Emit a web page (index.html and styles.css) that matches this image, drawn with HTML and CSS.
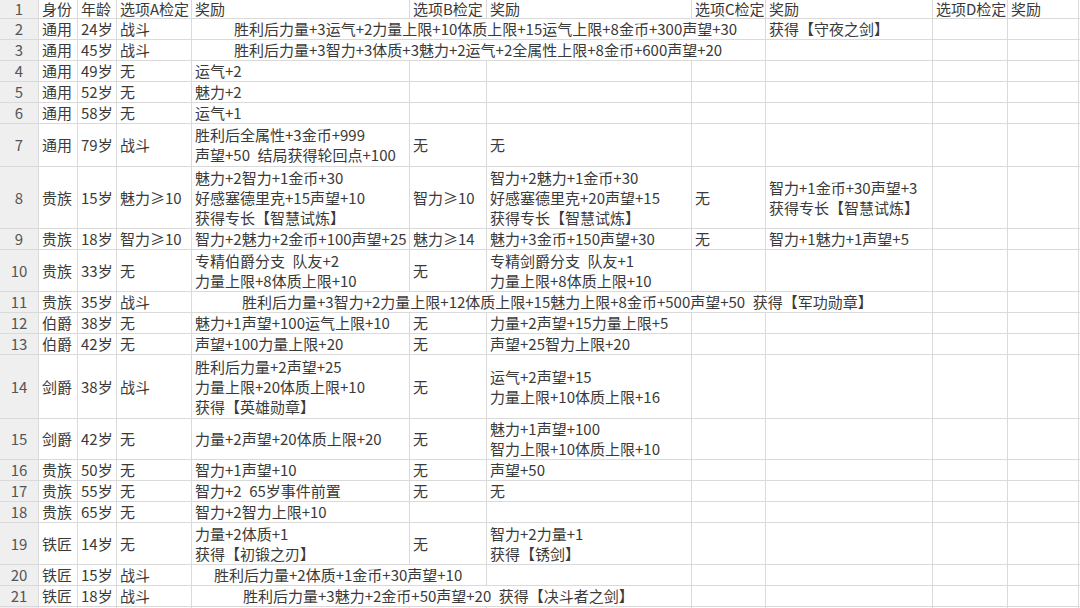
FILE: index.html
```html
<!DOCTYPE html>
<html lang="zh-CN">
<head>
<meta charset="utf-8">
<title>事件表</title>
<link rel="stylesheet" href="styles.css">
</head>
<body>
<table class="sheet">
  <colgroup>
    <col class="c-rn"><col class="c-a"><col class="c-b"><col class="c-c"><col class="c-d"><col class="c-e"><col class="c-f"><col class="c-g"><col class="c-h"><col class="c-i"><col class="c-j"><col class="c-k">
  </colgroup>
  <tbody>
    <tr class="r-hd"><th class="rn">1</th><td>身份</td><td>年龄</td><td>选项A检定</td><td>奖励</td><td>选项B检定</td><td>奖励</td><td>选项C检定</td><td>奖励</td><td>选项D检定</td><td>奖励</td><td></td></tr>
    <tr><th class="rn">2</th><td>通用</td><td>24岁</td><td>战斗</td><td colspan="4" class="spill s42">胜利后力量+3运气+2力量上限+10体质上限+15运气上限+8金币+300声望+30</td><td>获得【守夜之剑】</td><td></td><td></td><td></td></tr>
    <tr><th class="rn">3</th><td>通用</td><td>45岁</td><td>战斗</td><td colspan="4" class="spill s42">胜利后力量+3智力+3体质+3魅力+2运气+2全属性上限+8金币+600声望+20</td><td></td><td></td><td></td><td></td></tr>
    <tr><th class="rn">4</th><td>通用</td><td>49岁</td><td>无</td><td>运气+2</td><td></td><td></td><td></td><td></td><td></td><td></td><td></td></tr>
    <tr><th class="rn">5</th><td>通用</td><td>52岁</td><td>无</td><td>魅力+2</td><td></td><td></td><td></td><td></td><td></td><td></td><td></td></tr>
    <tr><th class="rn">6</th><td>通用</td><td>58岁</td><td>无</td><td>运气+1</td><td></td><td></td><td></td><td></td><td></td><td></td><td></td></tr>
    <tr class="r-43"><th class="rn">7</th><td>通用</td><td>79岁</td><td>战斗</td><td>胜利后全属性+3金币+999<br>声望+50&ensp;结局获得轮回点+100</td><td>无</td><td>无</td><td></td><td></td><td></td><td></td><td></td></tr>
    <tr class="r-62"><th class="rn">8</th><td>贵族</td><td>15岁</td><td>魅力≥10</td><td>魅力+2智力+1金币+30<br>好感塞德里克+15声望+10<br>获得专长【智慧试炼】</td><td>智力≥10</td><td>智力+2魅力+1金币+30<br>好感塞德里克+20声望+15<br>获得专长【智慧试炼】</td><td>无</td><td>智力+1金币+30声望+3<br>获得专长【智慧试炼】</td><td></td><td></td><td></td></tr>
    <tr><th class="rn">9</th><td>贵族</td><td>18岁</td><td>智力≥10</td><td>智力+2魅力+2金币+100声望+25</td><td>魅力≥14</td><td>魅力+3金币+150声望+30</td><td>无</td><td>智力+1魅力+1声望+5</td><td></td><td></td><td></td></tr>
    <tr class="r-42"><th class="rn">10</th><td>贵族</td><td>33岁</td><td>无</td><td>专精伯爵分支&ensp;队友+2<br>力量上限+8体质上限+10</td><td>无</td><td>专精剑爵分支&ensp;队友+1<br>力量上限+8体质上限+10</td><td></td><td></td><td></td><td></td><td></td></tr>
    <tr><th class="rn">11</th><td>贵族</td><td>35岁</td><td>战斗</td><td colspan="5" class="spill s50">胜利后力量+3智力+2力量上限+12体质上限+15魅力上限+8金币+500声望+50&ensp;获得【军功勋章】</td><td></td><td></td><td></td></tr>
    <tr><th class="rn">12</th><td>伯爵</td><td>38岁</td><td>无</td><td>魅力+1声望+100运气上限+10</td><td>无</td><td>力量+2声望+15力量上限+5</td><td></td><td></td><td></td><td></td><td></td></tr>
    <tr><th class="rn">13</th><td>伯爵</td><td>42岁</td><td>无</td><td>声望+100力量上限+20</td><td>无</td><td>声望+25智力上限+20</td><td></td><td></td><td></td><td></td><td></td></tr>
    <tr class="r-64"><th class="rn">14</th><td>剑爵</td><td>38岁</td><td>战斗</td><td>胜利后力量+2声望+25<br>力量上限+20体质上限+10<br>获得【英雄勋章】</td><td>无</td><td>运气+2声望+15<br>力量上限+10体质上限+16</td><td></td><td></td><td></td><td></td><td></td></tr>
    <tr class="r-41"><th class="rn">15</th><td>剑爵</td><td>42岁</td><td>无</td><td>力量+2声望+20体质上限+20</td><td>无</td><td>魅力+1声望+100<br>智力上限+10体质上限+10</td><td></td><td></td><td></td><td></td><td></td></tr>
    <tr><th class="rn">16</th><td>贵族</td><td>50岁</td><td>无</td><td>智力+1声望+10</td><td>无</td><td>声望+50</td><td></td><td></td><td></td><td></td><td></td></tr>
    <tr><th class="rn">17</th><td>贵族</td><td>55岁</td><td>无</td><td>智力+2&ensp;65岁事件前置</td><td>无</td><td>无</td><td></td><td></td><td></td><td></td><td></td></tr>
    <tr><th class="rn">18</th><td>贵族</td><td>65岁</td><td>无</td><td>智力+2智力上限+10</td><td></td><td></td><td></td><td></td><td></td><td></td><td></td></tr>
    <tr class="r-42"><th class="rn">19</th><td>铁匠</td><td>14岁</td><td>无</td><td>力量+2体质+1<br>获得【初锻之刃】</td><td>无</td><td>智力+2力量+1<br>获得【锈剑】</td><td></td><td></td><td></td><td></td><td></td></tr>
    <tr><th class="rn">20</th><td>铁匠</td><td>15岁</td><td>战斗</td><td colspan="2" class="spill s22">胜利后力量+2体质+1金币+30声望+10</td><td></td><td></td><td></td><td></td><td></td><td></td></tr>
    <tr><th class="rn">21</th><td>铁匠</td><td>18岁</td><td>战斗</td><td colspan="3" class="spill s51">胜利后力量+3魅力+2金币+50声望+20&ensp;获得【决斗者之剑】</td><td></td><td></td><td></td><td></td><td></td></tr>
    <tr><th class="rn"></th><td></td><td></td><td></td><td></td><td></td><td></td><td></td><td></td><td></td><td></td><td></td></tr>
  </tbody>
</table>
</body>
</html>
```

FILE: styles.css
```css
html, body {
  margin: 0;
  padding: 0;
  background: #ffffff;
  overflow: hidden;
}

.sheet {
  table-layout: fixed;
  border-collapse: collapse;
  width: 1138px;
  font-family: "Noto Sans CJK SC", "Noto Sans", sans-serif;
  font-size: 15px;
  color: #3a3a3a;
  margin-top: -1px;
  margin-left: -1px;
}

.c-rn { width: 39px; }
.c-a { width: 39px; }
.c-b { width: 39px; }
.c-c { width: 75px; }
.c-d { width: 218px; }
.c-e { width: 77px; }
.c-f { width: 205px; }
.c-g { width: 74px; }
.c-h { width: 167px; }
.c-i { width: 75px; }
.c-j { width: 71px; }
.c-k { width: 60px; }

.sheet td,
.sheet th {
  border: 1px solid #dadada;
  padding: 0 3px;
  height: 20px;
  line-height: 20px;
  vertical-align: middle;
  text-align: left;
  white-space: nowrap;
  overflow: hidden;
}

.sheet th.rn {
  background: #efefef;
  color: #555555;
  font-weight: normal;
  text-align: center;
  padding: 0;
}

.r-hd td, .r-hd th { height: 18px; line-height: 18px; }
.r-41 td, .r-41 th { height: 40px; }
.r-42 td, .r-42 th { height: 41px; }
.r-43 td, .r-43 th { height: 42px; }
.r-62 td, .r-62 th { height: 61px; }
.r-64 td, .r-64 th { height: 63px; }

.sheet td.spill { overflow: visible; }
.sheet td.s22 { padding-left: 22px; }
.sheet td.s42 { padding-left: 42px; }
.sheet td.s50 { padding-left: 50px; }
.sheet td.s51 { padding-left: 51px; }
```
